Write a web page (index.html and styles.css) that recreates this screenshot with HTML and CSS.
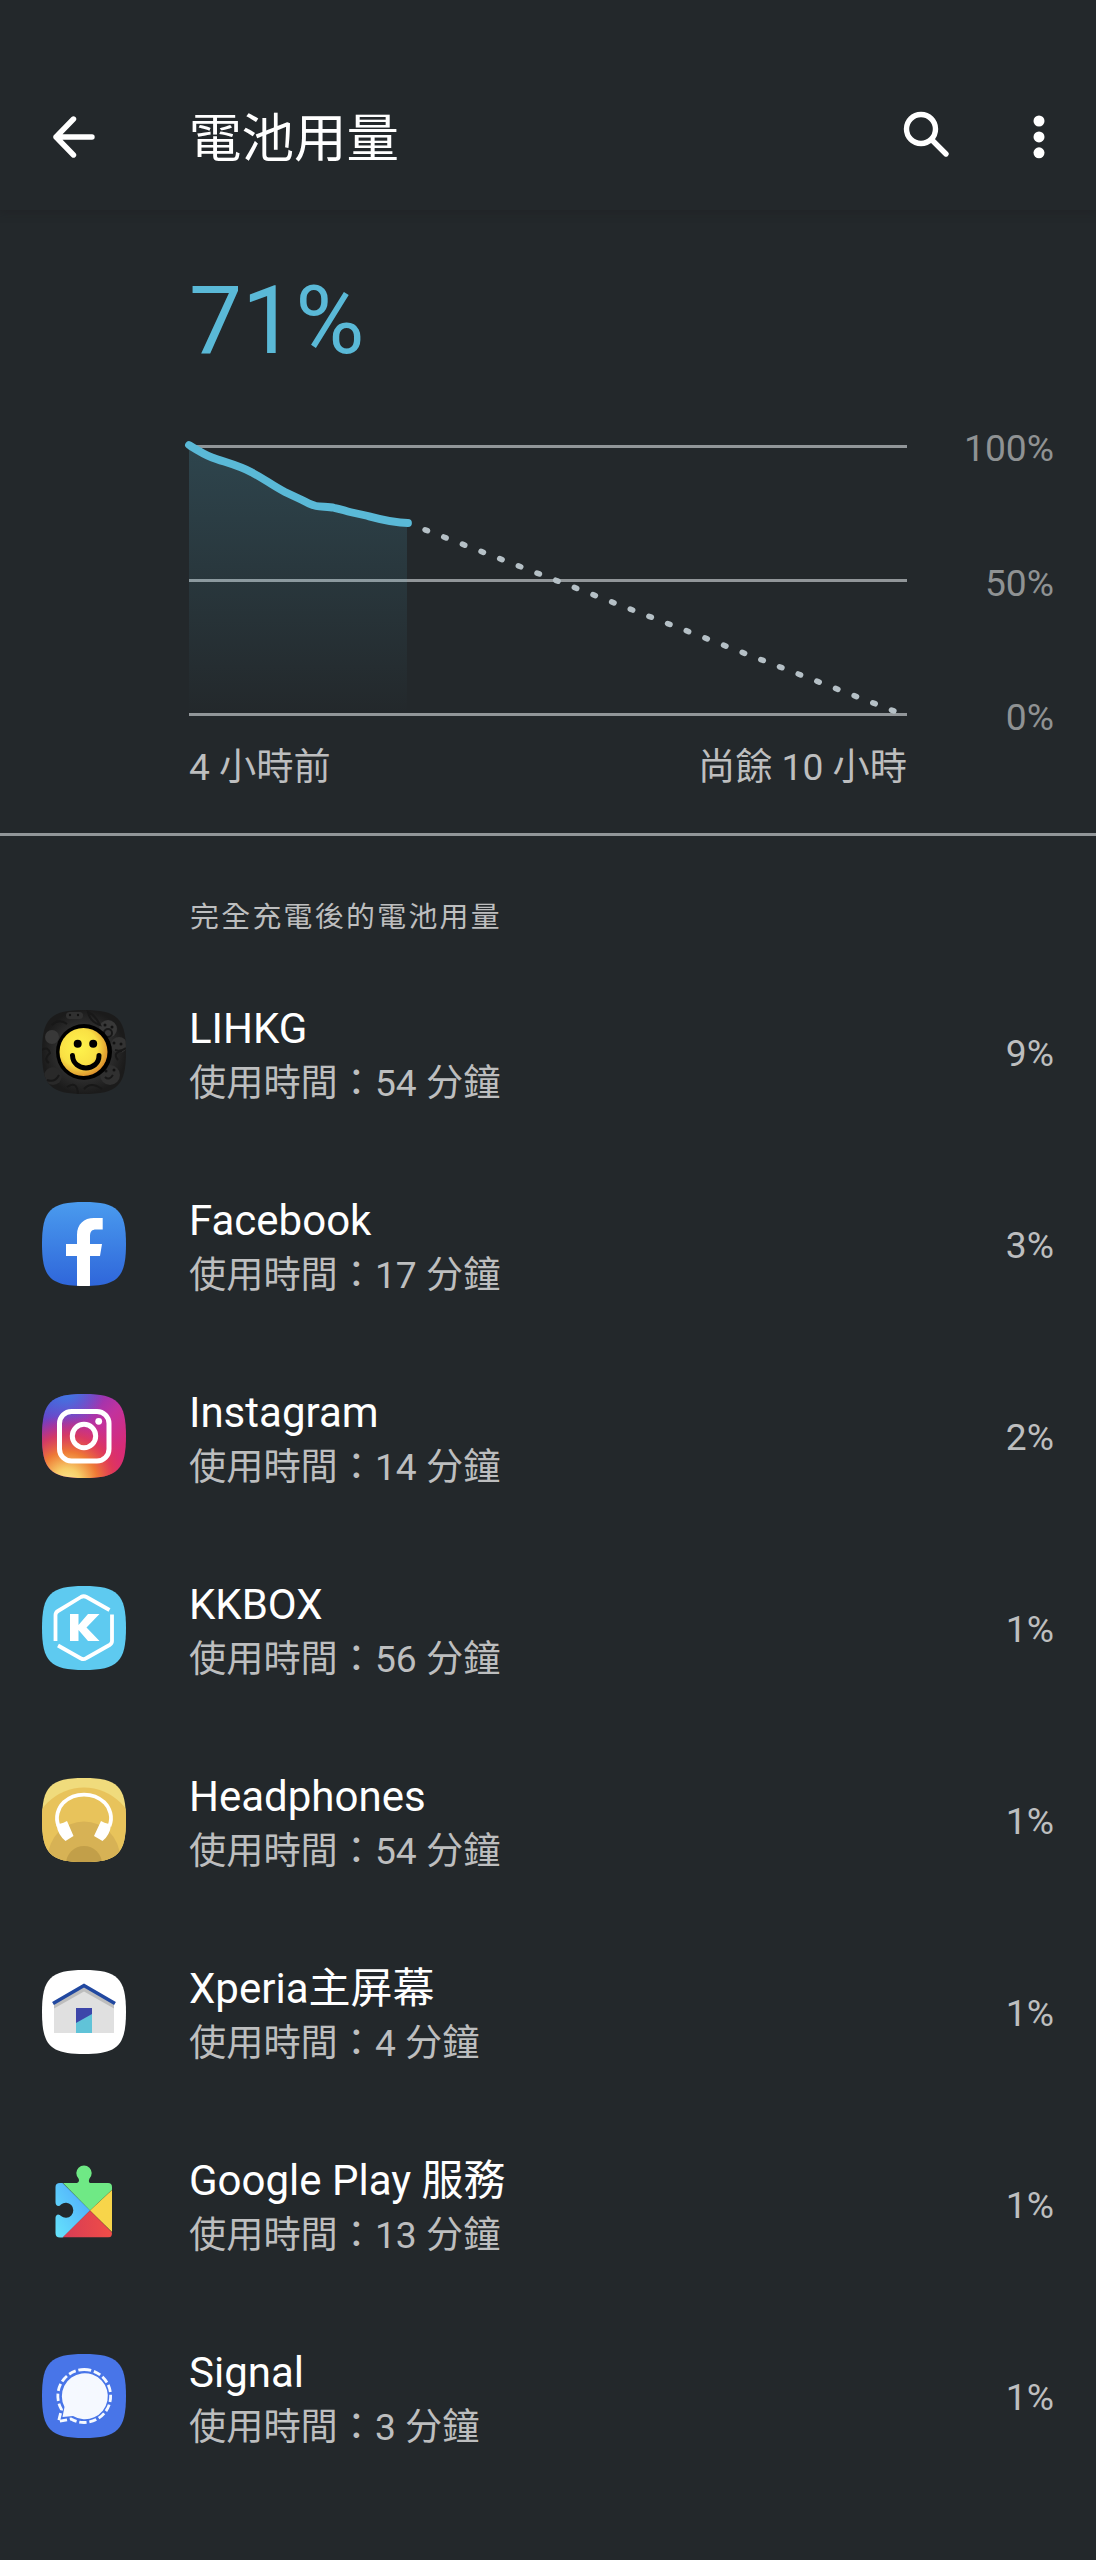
FILE: index.html
```html
<!DOCTYPE html>
<html lang="zh-Hant-HK">
<head>
    <meta charset="UTF-8">
    <meta name="viewport" content="width=device-width, initial-scale=1.0">
    <title>電池用量</title>
    <link rel="stylesheet" href="styles.css">
</head>
<body>
    <header class="app-bar">
        <svg class="back" width="42" height="42" viewBox="0 0 42 42">
            <path d="M20.500 3L3 21L20.500 39M3 21H39"/>
        </svg>
        <h1>電池用量</h1>
        <svg class="search" width="48" height="48" viewBox="0 0 48 48">
            <circle cx="19" cy="19" r="14.500"/>
            <path d="M30 30L44 44"/>
        </svg>
        <svg class="more" width="12" height="44" viewBox="0 0 12 44">
            <circle cx="6" cy="6" r="5.500"/>
            <circle cx="6" cy="21.900" r="5.500"/>
            <circle cx="6" cy="37.800" r="5.500"/>
        </svg>
    </header>

    <section class="usage">
        <div class="level">71%</div>
        <div class="graph">
            <svg class="plot" width="718" height="271" viewBox="0 0 718 271">
                <defs>
                    <linearGradient id="fade" x1="0" y1="0" x2="0" y2="1">
                        <stop offset="0" stop-color="#5ab9d7" stop-opacity=".2"/>
                        <stop offset="1" stop-color="#5ab9d7" stop-opacity="0"/>
                    </linearGradient>
                </defs>
                <path class="grid" d="M0 1.500H718M0 135.500H718M0 269.500H718"/>
                <path fill="url(#fade)" d="M0 0C8 5 15 9.500 23 12.500C35 17 49 20 63 27.500C74 33 84 41 96 47L113 55C119 58 122 60 127 61C132 62 140 61.500 145 62.800C152 64 156 66 162 67.300L178 70.800C190 74 204 78 218 78V265Q218 269 214 269H4Q0 269 0 265Z"/>
                <path class="forecast" d="M236.100 84.800L706 266.400"/>
                <path class="line" d="M0 0C8 5 15 9.500 23 12.500C35 17 49 20 63 27.500C74 33 84 41 96 47L113 55C119 58 122 60 127 61C132 62 140 61.500 145 62.800C152 64 156 66 162 67.300L178 70.800C190 74 204 78 219 78"/>
            </svg>
            <div class="y-labels">
                <span>100%</span>
                <span>50%</span>
                <span>0%</span>
            </div>
        </div>
        <div class="x-labels">
            <span>4 小時前</span>
            <span>尚餘 10 小時</span>
        </div>
    </section>

    <h2>完全充電後的電池用量</h2>

    <ul class="apps">
        <li>
            <svg class="icon" viewBox="0 0 84 84">
                <defs>
                    <clipPath id="squircle"><path d="M42 0C75.600 0 84 8.400 84 42S75.600 84 42 84S0 75.600 0 42S8.400 0 42 0Z"/></clipPath>
                    <radialGradient id="smile" cx=".4" cy=".4" r=".65">
                        <stop offset="0" stop-color="#fff44c"/>
                        <stop offset=".6" stop-color="#f9e044"/>
                        <stop offset="1" stop-color="#d98a2b"/>
                    </radialGradient>
                    <radialGradient id="dark">
                        <stop offset=".5" stop-color="#343434"/>
                        <stop offset="1" stop-color="#1b1b1b"/>
                    </radialGradient>
                </defs>
                <g clip-path="url(#squircle)">
                    <rect width="84" height="84" fill="url(#dark)"/>
                    <g fill="#383838">
                        <rect x="24" y="2" width="17" height="7" rx="3.500" fill="#303030"/>
                        <circle cx="66" cy="19" r="9"/>
                        <circle cx="10" cy="27" r="7"/>
                        <circle cx="77" cy="35" r="8" fill="#333"/>
                        <circle cx="68" cy="65" r="10" fill="#303030"/>
                        <circle cx="11" cy="66" r="9" fill="#292929"/>
                    </g>
                    <g fill="none" stroke="#181818" stroke-width="2">
                        <path d="M46 2Q48 12 58 15Q53 5 46 2ZM0 40Q6 36 8 43Q1 49 7 53M10 15Q17 8 25 14M25 77Q35 70 36 84M42 79Q49 71 60 79M76 50Q70 43 80 41"/>
                        <circle cx="66" cy="23" r="4"/>
                        <path d="M63 67Q67 71 71 65M5 70Q13 73 17 65M73 40Q79 42 84 38"/>
                    </g>
                    <g fill="#121212">
                        <circle cx="63" cy="15" r="1.500"/><circle cx="70" cy="17" r="1.500"/>
                        <circle cx="28" cy="5" r="1.200"/><circle cx="36" cy="5" r="1.200"/>
                        <circle cx="72" cy="33" r="1.500"/><circle cx="79" cy="34" r="1.500"/>
                        <circle cx="64" cy="61" r="1.500"/><circle cx="72" cy="60" r="1.500"/>
                    </g>
                </g>
                <circle cx="42" cy="42" r="28"/>
                <circle cx="41.500" cy="42" r="24" fill="url(#smile)"/>
                <circle cx="35.700" cy="33.700" r="4"/>
                <circle cx="51.200" cy="33.700" r="4"/>
                <path d="M30.500 45.500C31 62 57 62 57 45.500" fill="none" stroke="#000" stroke-width="5" stroke-linecap="round"/>
            </svg>
            <div class="info">
                <div class="name">LIHKG</div>
                <div class="time">使用時間：54 分鐘</div>
            </div>
            <span class="percent">9%</span>
        </li>
        <li>
            <svg class="icon" viewBox="0 0 84 84">
                <defs>
                    <linearGradient id="fb" x1="0" y1="0" x2="0" y2="1">
                        <stop offset="0" stop-color="#4a9bee"/>
                        <stop offset="1" stop-color="#2f66da"/>
                    </linearGradient>
                </defs>
                <g clip-path="url(#squircle)">
                    <rect width="84" height="84" fill="url(#fb)"/>
                    <path fill="#fff" d="M35 84V54H24V42H35V33C35 22 42 16 52 16H60.700V27.500H54C50 27.500 48 29.500 48 34V42H60L58 54H48V84Z"/>
                </g>
            </svg>
            <div class="info">
                <div class="name">Facebook</div>
                <div class="time">使用時間：17 分鐘</div>
            </div>
            <span class="percent">3%</span>
        </li>
        <li>
            <svg class="icon" viewBox="0 0 84 84">
                <defs>
                    <linearGradient id="ig" x1=".1" y1="0" x2=".85" y2=".75">
                        <stop offset="0" stop-color="#4b52d2"/>
                        <stop offset=".3" stop-color="#8735bd"/>
                        <stop offset=".65" stop-color="#c2329d"/>
                        <stop offset="1" stop-color="#d82b76"/>
                    </linearGradient>
                    <radialGradient id="ig-blue" cx=".3" cy="-.05" r=".45">
                        <stop offset="0" stop-color="#3b7de6"/>
                        <stop offset="1" stop-color="#3b7de6" stop-opacity="0"/>
                    </radialGradient>
                    <radialGradient id="ig-warm" cx=".3" cy="1.050" r=".8">
                        <stop offset="0" stop-color="#fae690"/>
                        <stop offset=".2" stop-color="#f7ce69"/>
                        <stop offset=".45" stop-color="#ee7a35"/>
                        <stop offset=".7" stop-color="#e23b52" stop-opacity=".8"/>
                        <stop offset="1" stop-color="#d82b76" stop-opacity="0"/>
                    </radialGradient>
                </defs>
                <g clip-path="url(#squircle)">
                    <rect width="84" height="84" fill="url(#ig)"/>
                    <rect width="84" height="84" fill="url(#ig-blue)"/>
                    <rect width="84" height="84" fill="url(#ig-warm)"/>
                </g>
                <g fill="none" stroke="#fff" stroke-width="5">
                    <rect x="17.500" y="17.500" width="49.500" height="49.500" rx="12"/>
                    <circle cx="42" cy="42" r="11.700"/>
                </g>
                <circle cx="56.700" cy="27.300" r="3.400" fill="#fff"/>
            </svg>
            <div class="info">
                <div class="name">Instagram</div>
                <div class="time">使用時間：14 分鐘</div>
            </div>
            <span class="percent">2%</span>
        </li>
        <li>
            <svg class="icon" viewBox="0 0 84 84">
                <g clip-path="url(#squircle)">
                    <rect width="84" height="84" fill="#5ecaf0"/>
                </g>
                <g fill="none" stroke="#fff" stroke-width="3.800" stroke-linejoin="round">
                    <path d="M13.500 55V29Q13.500 26.500 16 25L39 11Q41.700 9.500 44.500 11L67.500 24"/>
                    <path d="M70 28.500V55Q70 57.500 67.500 59L44.500 72Q41.700 74 39 72.500L16 59.500"/>
                </g>
                <path fill="#fff" d="M28 28H36.500V39L46 28H57.500L44.500 41.500L57.500 55H46L36.500 44V55H28Z"/>
            </svg>
            <div class="info">
                <div class="name">KKBOX</div>
                <div class="time">使用時間：56 分鐘</div>
            </div>
            <span class="percent">1%</span>
        </li>
        <li>
            <svg class="icon" viewBox="0 0 84 84">
                <g clip-path="url(#squircle)">
                    <rect width="84" height="84" fill="#f0db7c"/>
                    <circle cx="42" cy="61" r="51.500" fill="#e8c35b"/>
                    <circle cx="42" cy="79.500" r="36" fill="#d7b255"/>
                    <circle cx="42" cy="86" r="18" fill="#c29f49"/>
                </g>
                <path d="M16.500 48C13 39 16 30 21.500 24.500C33 14 51 14 62.500 24.500C68 30 71 39 67.500 48" fill="none" stroke="#fff" stroke-width="3.800"/>
                <path fill="#fff" d="M17 46Q22 45 25 43L31.500 58L23.500 63Q16 57 14.500 47Z"/>
                <path fill="#fff" d="M67 46Q62 45 59 43L52 58L60.500 63Q68 57 69 47Z"/>
            </svg>
            <div class="info">
                <div class="name">Headphones</div>
                <div class="time">使用時間：54 分鐘</div>
            </div>
            <span class="percent">1%</span>
        </li>
        <li>
            <svg class="icon" viewBox="0 0 84 84">
                <g clip-path="url(#squircle)">
                    <rect width="84" height="84" fill="#fff"/>
                </g>
                <path fill="#e0e0e0" d="M12 34L42 17L72 34V63H12Z"/>
                <path fill="#bdbdbd" d="M12 34L42 17L72 34V38.500L42 21.500L12 38.500Z"/>
                <path fill="none" stroke="#2148a0" stroke-width="3.600" d="M11 33.500L42 15.500L73 33.500"/>
                <rect x="34" y="38" width="16" height="25" fill="#60c3d8"/>
                <path fill="#3d46a9" d="M34 38H50V44L34 53Z"/>
            </svg>
            <div class="info">
                <div class="name">Xperia主屏幕</div>
                <div class="time">使用時間：4 分鐘</div>
            </div>
            <span class="percent">1%</span>
        </li>
        <li>
            <svg class="icon" viewBox="0 0 84 84">
                <defs>
                    <linearGradient id="play-blue" x1="1" y1="0" x2="0" y2="1">
                        <stop offset=".3" stop-color="#55b7fb"/>
                        <stop offset="1" stop-color="#66e5fb"/>
                    </linearGradient>
                    <linearGradient id="play-red" x1="0" y1="0" x2="1" y2="0">
                        <stop offset="0" stop-color="#d63c55"/>
                        <stop offset="1" stop-color="#f34f46"/>
                    </linearGradient>
                    <clipPath id="puzzle">
                        <path d="M18 25H35Q38 24 36.500 20.500A7.700 7.700 0 1 1 47.500 20.500Q46 24 48 25H66Q70 25 70 29V75Q70 79.500 66 79.500H18Q13.500 79.500 13.500 75V60Q13.500 57 16 56.500Q18 56.500 19 58A7.500 7.500 0 1 0 19 46.500Q18 48 16 48Q13.500 47.500 13.500 44V29Q13.500 25 18 25Z"/>
                    </clipPath>
                </defs>
                <g transform="translate(0 -4)">
                    <g clip-path="url(#puzzle)">
                        <path fill="#6fe985" d="M18 5H74V28L48 52.500L21 25Z"/>
                        <path fill="url(#play-blue)" d="M13 25H20.500L48 52.500L20.500 80H13Z"/>
                        <path fill="#f8d54a" d="M48 52.500L72 30V76Z"/>
                        <path fill="url(#play-red)" d="M48 52.500L75 79.500H20.500Z"/>
                    </g>
                </g>
            </svg>
            <div class="info">
                <div class="name">Google Play 服務</div>
                <div class="time">使用時間：13 分鐘</div>
            </div>
            <span class="percent">1%</span>
        </li>
        <li>
            <svg class="icon" viewBox="0 0 84 84">
                <g clip-path="url(#squircle)">
                    <rect width="84" height="84" fill="#4875e8"/>
                </g>
                <path fill="#f5f9ff" d="M20.500 63L22.500 53A23 23 0 1 1 31 62Z"/>
                <path fill="none" stroke="#f5f9ff" stroke-width="2.800" stroke-dasharray="7.300 2.800" d="M42 15.500A26.500 26.500 0 1 1 29 65L16.500 67.500L19.500 55.500A26.500 26.500 0 0 1 42 15.500"/>
            </svg>
            <div class="info">
                <div class="name">Signal</div>
                <div class="time">使用時間：3 分鐘</div>
            </div>
            <span class="percent">1%</span>
        </li>
    </ul>
</body>
</html>
```
FILE: styles.css
```css
:root {
    --background: #23282b;
    --accent: #5ab9d7;
    --grid: #919699;
    --text: #fff;
    --text-secondary: #bdbebf;
    --text-muted: #8f9293;
}

* {
    box-sizing: border-box;
}

body {
    margin: 0;
    min-height: 2560px;
    background: var(--background);
    color: var(--text);
    font-family: Roboto, "Noto Sans CJK TC", sans-serif;
    font-size: 37.2px;
}

header.app-bar {
    display: flex;
    align-items: center;
    height: 210px;
    padding: 63px 51px 0 53px;
    box-shadow: 0 1px 8px rgba(30, 28, 32, 0.5);
}

.app-bar h1 {
    flex: 1;
    margin: 4px 0 0 94px;
    font-size: 52.5px;
    font-weight: normal;
    line-height: 70px;
}

.back,
.search {
    fill: none;
    stroke: #fff;
    stroke-width: 5.4;
    stroke-linecap: round;
    stroke-linejoin: round;
}

.search {
    margin-right: 83px;
    margin-bottom: 5px;
}

.more {
    fill: #fff;
}

.usage {
    height: 626px;
    padding: 51px 42px 0 189px;
    border-bottom: 3px solid var(--grid);
}

.level {
    height: 184px;
    color: var(--accent);
    font-size: 94.5px;
    line-height: 120px;
}

.graph {
    display: flex;
    justify-content: space-between;
    height: 271px;
}

.plot {
    overflow: visible;
}

.plot .grid {
    stroke: var(--grid);
    stroke-width: 3;
}

.plot .line {
    fill: none;
    stroke: var(--accent);
    stroke-width: 7.8;
    stroke-linecap: round;
}

.plot .forecast {
    stroke: #b5c0c6;
    stroke-width: 5.6;
    stroke-linecap: round;
    stroke-dasharray: 2.5 17.5;
}

.y-labels {
    display: flex;
    flex-direction: column;
    justify-content: space-between;
    margin: -19px 0 -23px;
    color: var(--text-muted);
    line-height: 44px;
    text-align: right;
}

.x-labels {
    display: flex;
    justify-content: space-between;
    width: 718px;
    padding-top: 29px;
    color: var(--text-secondary);
    line-height: 44px;
}

h2 {
    height: 120px;
    margin: 0;
    padding: 59px 0 0 190px;
    color: var(--text-secondary);
    font-size: 28.9px;
    font-weight: normal;
    line-height: 44px;
    letter-spacing: 0.08em;
}

.apps {
    margin: 0;
    padding: 0;
    list-style: none;
}

.apps li {
    display: flex;
    align-items: center;
    height: 192px;
    padding: 0 42px;
}

.icon {
    width: 84px;
    height: 84px;
}

.info {
    flex: 1;
    margin-left: 63px;
    padding-top: 7px;
    line-height: 54px;
}

.name {
    font-size: 42px;
}

.time,
.percent {
    color: var(--text-secondary);
}

.percent {
    padding-top: 2px;
}
```
